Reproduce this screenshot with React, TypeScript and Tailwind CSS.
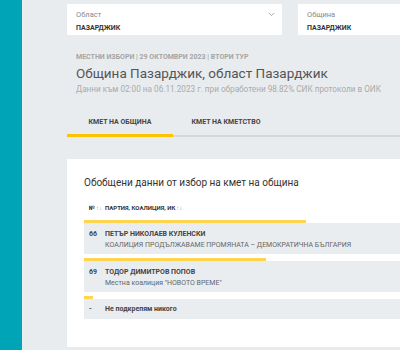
import { ChevronDown } from "lucide-react";

const rows = [
  { no: "66", name: "ПЕТЪР НИКОЛАЕВ КУЛЕНСКИ", party: "КОАЛИЦИЯ ПРОДЪЛЖАВАМЕ ПРОМЯНАТА – ДЕМОКРАТИЧНА БЪЛГАРИЯ", bar: 222 },
  { no: "69", name: "ТОДОР ДИМИТРОВ ПОПОВ", party: 'Местна коалиция "НОВОТО ВРЕМЕ"', bar: 182 },
  { no: "-", name: "Не подкрепям никого", party: "", bar: 9 },
];

function SortIcon() {
  return <span className="ml-[1px] text-[6px] font-normal text-gray-400">↑↓</span>;
}

export default function App() {
  return (
    <div className="flex min-h-[350px] w-[400px] overflow-hidden bg-[#e9ecef] font-['Roboto',sans-serif]">
      <div className="w-[22px] shrink-0 bg-[#00a4b7]" />
      <div className="ml-[45px] flex-1 pt-[4px]">
        <div className="flex gap-[16px]">
          <div className="relative h-[31px] w-[215px] shrink-0 bg-white px-[9px] pt-[6px]">
            <div className="text-[7.5px] leading-[9px] text-[#888]">Област</div>
            <div className="mt-[5px] text-[7px] font-bold leading-[9px] text-[#333]">ПАЗАРДЖИК</div>
            <ChevronDown className="absolute right-[6px] top-[6px] h-[9px] w-[9px] text-[#888]" />
          </div>
          <div className="h-[31px] w-[215px] shrink-0 bg-white px-[9px] pt-[6px]">
            <div className="text-[7.5px] leading-[9px] text-[#888]">Община</div>
            <div className="mt-[5px] text-[7px] font-bold leading-[9px] text-[#333]">ПАЗАРДЖИК</div>
          </div>
        </div>

        <div className="ml-[9px] mt-[17px]">
          <div className="text-[7px] font-bold leading-[10px] text-[#a5a5a5]">МЕСТНИ ИЗБОРИ | 29 ОКТОМВРИ 2023 | ВТОРИ ТУР</div>
          <div className="mt-[1px] text-[13.5px] leading-[20px] text-[#555]">Община Пазарджик, област Пазарджик</div>
          <div className="mt-[1px] text-[8.2px] leading-[10px] text-[#aaa]">Данни към 02:00 на 06.11.2023 г. при обработени 98.82% СИК протоколи в ОИК</div>
        </div>

        <div className="mt-[23px] flex border-b-[2px] border-[#d5d8db]">
          <div className="relative w-[106px] pb-[7px] text-center text-[7px] font-bold leading-[11px] text-[#444]">
            КМЕТ НА ОБЩИНА
            <div className="absolute bottom-[-2px] left-0 h-[3px] w-full bg-[#fdc300]" />
          </div>
          <div className="w-[106px] pb-[7px] text-center text-[7px] font-bold leading-[11px] text-[#444]">КМЕТ НА КМЕТСТВО</div>
        </div>

        <div className="mt-[22px] min-h-[188px] bg-white px-[17px] pt-[18px]">
          <div className="text-[10px] leading-[12px] text-[#333]">Обобщени данни от избор на кмет на община</div>
          <div className="mt-[15px] flex items-center pl-[5px] text-[6px] font-bold leading-[8px] text-[#333]">
            <div className="flex w-[16px] shrink-0 items-center">
              <span>№</span>
              <SortIcon />
            </div>
            <span>ПАРТИЯ, КОАЛИЦИЯ, ИК</span>
            <SortIcon />
          </div>
          <div className="mt-[8px] flex flex-col gap-[4px]">
            {rows.map((r) => (
              <div key={r.no}>
                <div className="h-[3px] bg-[#ffd54f]" style={{ width: r.bar }} />
                <div className={`flex bg-[#eaedf0] pl-[5px] ${r.party ? "h-[31px] pt-[6px]" : "h-[20px] items-center"}`}>
                  <div className="w-[16px] shrink-0 text-[7px] font-bold leading-[10px] text-[#444]">{r.no}</div>
                  <div>
                    <div className="text-[7px] font-bold leading-[10px] text-[#444]">{r.name}</div>
                    {r.party && <div className="mt-[1px] text-[7px] leading-[10px] text-[#666]">{r.party}</div>}
                  </div>
                </div>
              </div>
            ))}
          </div>
        </div>
      </div>
    </div>
  );
}
